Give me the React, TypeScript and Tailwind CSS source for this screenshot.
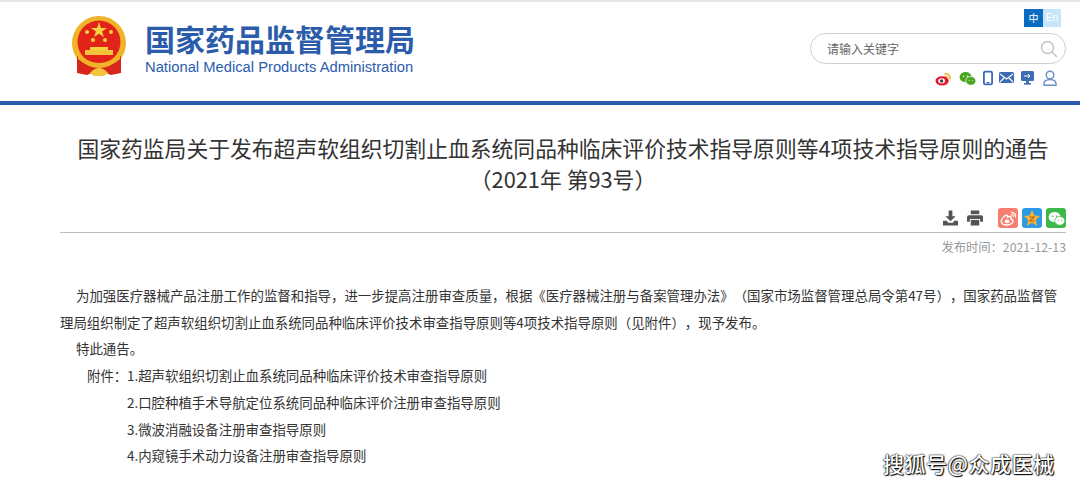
import React from "react";

const CJK = "font-['Noto_Sans_CJK_SC','Liberation_Sans',sans-serif]";

function Emblem() {
  return (
    <svg width="56" height="60" viewBox="0 0 56 60">
      <circle cx="28" cy="27" r="27" fill="#f0b429" />
      <circle cx="28" cy="26" r="21.500" fill="#e2231a" />
      <polygon points="28,6 30,12 36,12 31,15.500 33,21 28,17.800 23,21 25,15.500 20,12 26,12" fill="#f7d23e" />
      <circle cx="16" cy="16" r="2" fill="#f7d23e" />
      <circle cx="40" cy="16" r="2" fill="#f7d23e" />
      <circle cx="22" cy="24" r="2" fill="#f7d23e" />
      <circle cx="34" cy="24" r="2" fill="#f7d23e" />
      <rect x="19" y="31" width="18" height="3" fill="#f7d23e" />
      <rect x="14" y="34" width="28" height="5" fill="#f3c53a" />
      <path d="M6 40 Q28 60 50 40 L50 57 L40 59 L28 54 L16 59 L6 57Z" fill="#d8261c" />
      <path d="M7 38 Q28 56 49 38 L49 43 Q28 61 7 43Z" fill="#f0b429" />
      <path d="M19 57 Q28 47 37 57 L33 60 H23Z" fill="#f3c53a" />
    </svg>
  );
}

function Weibo() {
  return (
    <svg width="17" height="17" viewBox="0 0 18 18">
      <ellipse cx="7.500" cy="11.500" rx="7" ry="5" fill="#e6162d" />
      <ellipse cx="7" cy="11.500" rx="3.600" ry="2.800" fill="#fff" />
      <circle cx="7" cy="11.700" r="1.800" fill="#444" />
      <path d="M10 4a5 5 0 0 1 6 6" fill="none" stroke="#f5a623" strokeWidth="1.600" />
      <path d="M10.500 6.700a2.500 2.500 0 0 1 3 3" fill="none" stroke="#f5a623" strokeWidth="1.200" />
    </svg>
  );
}

function WeiboWhite() {
  return (
    <svg width="17" height="17" viewBox="0 0 18 18" fill="none" stroke="#fff">
      <path d="M7 5.500C3.500 7 1 10 1.500 12.500c.5 2.500 3.500 3.500 6.500 3.300 3.500-.3 6-2.200 5.800-4.300-.1-1.300-1.400-1.700-2.200-2 .6-1.500.2-2.600-1.300-2.600-.8 0-1.700.3-2.300.7.300-1.300-.2-2.400-1-2.100z" strokeWidth="1.500" />
      <ellipse cx="7.500" cy="12" rx="2.600" ry="2" fill="#fff" stroke="none" />
      <path d="M11.500 2.500a4.500 4.500 0 0 1 5 5.500" strokeWidth="1.400" />
      <path d="M11.500 5a2 2 0 0 1 2.500 2.500" strokeWidth="1.200" />
    </svg>
  );
}

function Wechat({ size = 18, a = "#4aa51f", b = "#4aa51f", ring = "#fff" }: { size?: number; a?: string; b?: string; ring?: string }) {
  return (
    <svg width={size} height={size} viewBox="0 0 18 18">
      <ellipse cx="7" cy="7.500" rx="6.400" ry="5.400" fill={a} />
      <ellipse cx="12.500" cy="11.500" rx="5.400" ry="4.600" fill={b} stroke={ring} strokeWidth="0.800" />
      <circle cx="5" cy="6.500" r="0.800" fill={ring} />
      <circle cx="9" cy="6.500" r="0.800" fill={ring} />
      <circle cx="11" cy="10.800" r="0.600" fill={ring} />
      <circle cx="14.400" cy="10.800" r="0.600" fill={ring} />
    </svg>
  );
}

function TopIcons() {
  const c = "#3b6cb4";
  return (
    <div className="flex items-center justify-end h-[20px] mr-[23px] mt-[4px]">
      <Weibo />
      <div className="ml-[7px]"><Wechat size={17} /></div>
      <svg className="ml-[7px]" width="10" height="16" viewBox="0 0 11 16">
        <rect x="1" y="1" width="9" height="14" rx="1.500" fill="none" stroke={c} strokeWidth="2" />
        <rect x="4" y="12.400" width="3" height="1.400" fill={c} />
      </svg>
      <svg className="ml-[6px]" width="15" height="12" viewBox="0 0 15 12">
        <rect width="15" height="11" rx="1.500" fill={c} />
        <path d="M1 2l6.500 5L14 2M1 10l4.500-4.500M14 10L9.500 5.500" fill="none" stroke="#fff" strokeWidth="1.100" />
      </svg>
      <svg className="ml-[7px]" width="13" height="14" viewBox="0 0 13 14">
        <rect width="13" height="10" rx="1.500" fill={c} />
        <rect x="5" y="10" width="3" height="2.500" fill={c} />
        <rect x="3" y="12" width="7" height="1.600" fill={c} />
        <path d="M3 5h6M7 3l2 2-2 2" fill="none" stroke="#fff" strokeWidth="1" />
      </svg>
      <svg className="ml-[9px]" width="14" height="16" viewBox="0 0 14 16">
        <circle cx="7" cy="5" r="3.800" fill="none" stroke="#6a8fc8" strokeWidth="1.400" />
        <path d="M1 15.200v-1.200c0-3 2.500-4.400 6-4.400s6 1.400 6 4.400v1.200z" fill="none" stroke="#6a8fc8" strokeWidth="1.400" />
      </svg>
    </div>
  );
}

function Header() {
  return (
    <header className="h-[105px] border-t-2 border-[#e6e6e6] border-b-[4px] border-b-[#2b5cab] flex justify-between bg-white">
      <div className="flex items-start ml-[71px] pt-[14px]">
        <Emblem />
        <div className="ml-[18px] text-[#2b5cab]">
          <div className={`${CJK} text-[30px] leading-[40px] font-bold whitespace-nowrap mt-[2px]`}>国家药品监督管理局</div>
          <div className="font-['Liberation_Sans',sans-serif] text-[14.760px] leading-[16px] mt-[1px] whitespace-nowrap">National Medical Products Administration</div>
        </div>
      </div>
      <div className="w-[270px] pt-[7px]">
        <div className="flex justify-end mr-[19px]">
          <span className={`${CJK} w-[19px] h-[18px] bg-[#0a6cc0] text-white text-[10px] leading-[18px] text-center`}>中</span>
          <span className="font-['Liberation_Sans',sans-serif] w-[18px] h-[18px] bg-[#c8e6fb] text-white text-[10px] leading-[18px] text-center">En</span>
        </div>
        <div className="flex items-center justify-between w-[256px] h-[31px] mt-[6px] rounded-full border border-[#cfcfcf] pl-[16px] pr-[7px]">
          <span className={`${CJK} text-[12px] text-[#666]`}>请输入关键字</span>
          <svg width="18" height="18" viewBox="0 0 18 18" fill="none" stroke="#c4c4c4" strokeWidth="1.500">
            <circle cx="7.500" cy="7.500" r="6" />
            <path d="M12 12l5 5" />
          </svg>
        </div>
        <TopIcons />
      </div>
    </header>
  );
}

function ShareIcons() {
  return (
    <div className="flex items-center justify-end h-[20px] mt-[14px]">
      <svg width="15" height="16" viewBox="0 0 16 16" fill="#555">
        <path d="M6 0h4v6h3.500L8 11.500 2.500 6H6z" />
        <path d="M0 11h4l1.500 2h5L12 11h4v5H0z" />
      </svg>
      <svg className="ml-[9px]" width="16" height="16" viewBox="0 0 17 16" fill="#555">
        <path d="M4 0h9v4H4z" />
        <path d="M2 5h13a2 2 0 0 1 2 2v5h-3V9H3v3H0V7a2 2 0 0 1 2-2z" />
        <path d="M4 10h9v6H4z" />
      </svg>
      <div className="ml-[15px] w-[20px] h-[20px] rounded-[3px] bg-[#f77d70] flex items-center justify-center">
        <WeiboWhite />
      </div>
      <div className="ml-[4px] w-[20px] h-[20px] rounded-[3px] bg-[#2b9ae8] flex items-center justify-center">
        <svg width="18" height="18" viewBox="0 0 18 18">
          <polygon points="9,1 11.400,6.500 17,7 12.800,11 14.200,17 9,13.800 3.800,17 5.200,11 1,7 6.600,6.500" fill="#f7b52c" />
          <path d="M6.500 8h5l-5 4h5" fill="none" stroke="#b8502a" strokeWidth="1" />
        </svg>
      </div>
      <div className="ml-[4px] w-[20px] h-[20px] rounded-[3px] bg-[#3cb94a] flex items-center justify-center">
        <Wechat size={17} a="#fff" b="#fff" ring="#3cb94a" />
      </div>
    </div>
  );
}

const indent = "pl-[16px]";

export default function App() {
  return (
    <div className={`${CJK} relative w-[1080px] h-[486px] overflow-hidden bg-white [text-spacing-trim:space-all]`}>
      <Header />
      <main className="pl-[60px] pr-[14px]">
        <h1 className="text-[21.800px] leading-[31px] text-[#333] text-center font-normal mt-[27px] whitespace-nowrap">
          国家药监局关于发布超声软组织切割止血系统同品种临床评价技术指导原则等4项技术指导原则的通告
          <br />（2021年 第93号）
        </h1>
        <ShareIcons />
        <div className="border-t border-[#bdbdbd] mt-[4px] pt-[5px] text-right text-[12.300px] leading-[18px] text-[#999]">
          发布时间：2021-12-13
        </div>
        <div className="text-[13.430px] leading-[26.700px] text-[#333] mt-[26px] whitespace-nowrap">
          <p className={indent}>为加强医疗器械产品注册工作的监督和指导，进一步提高注册审查质量，根据《医疗器械注册与备案管理办法》（国家市场监督管理总局令第47号），国家药品监督管</p>
          <p>理局组织制定了超声软组织切割止血系统同品种临床评价技术审查指导原则等4项技术指导原则（见附件），现予发布。</p>
          <p className={indent}>特此通告。</p>
          <div className="flex pl-[27px]">
            <span className="w-[40px] shrink-0">附件：</span>
            <div>
              <p>1.超声软组织切割止血系统同品种临床评价技术审查指导原则</p>
              <p>2.口腔种植手术导航定位系统同品种临床评价注册审查指导原则</p>
              <p>3.微波消融设备注册审查指导原则</p>
              <p>4.内窥镜手术动力设备注册审查指导原则</p>
            </div>
          </div>
        </div>
      </main>
      <div className="absolute left-[883px] top-[449px] text-[21px] leading-[28px] font-medium tracking-[0.500px] text-white [text-shadow:0_0_2px_#000,0_0_1px_#000,1px_1px_1px_#000] whitespace-nowrap">
        搜狐号@众成医械
      </div>
    </div>
  );
}
